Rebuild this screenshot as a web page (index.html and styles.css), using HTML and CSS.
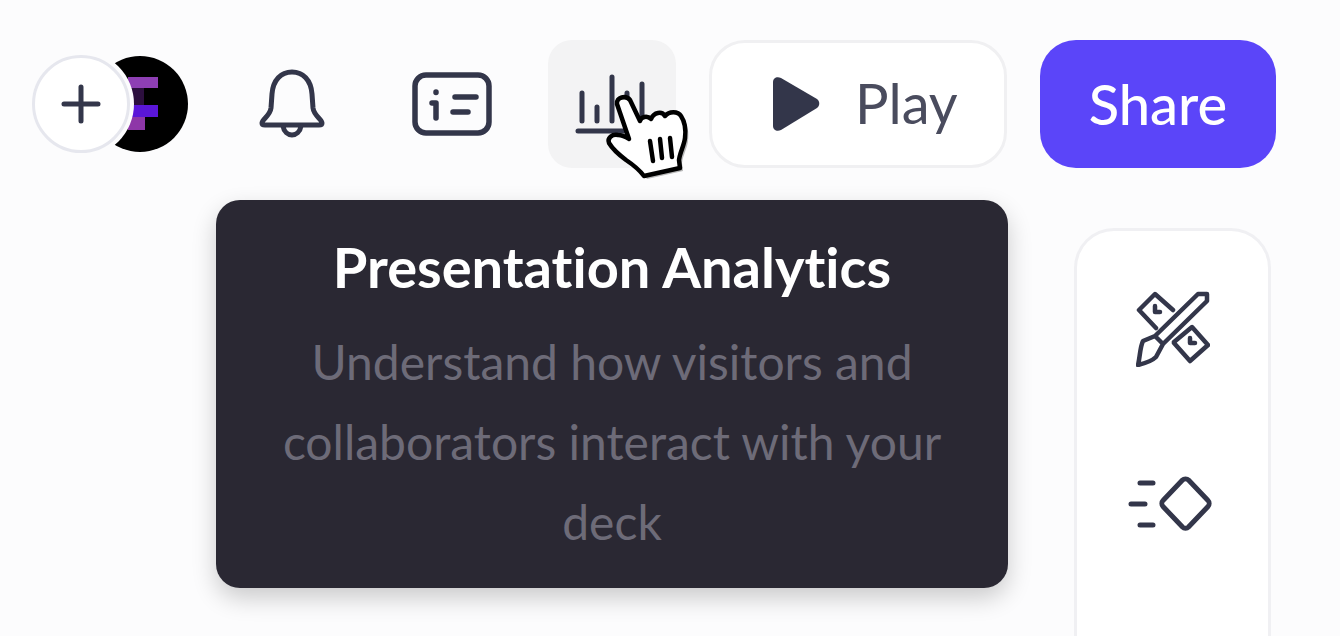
FILE: index.html
```html
<!DOCTYPE html>
<html lang="en">
<head>
<meta charset="utf-8">
<title>Presentation Analytics</title>
<link rel="stylesheet" href="styles.css">
</head>
<body>
<header class="topbar">
  <div class="people">
    <button class="add" aria-label="Add">
      <svg width="44" height="44" viewBox="0 0 44 44" fill="none" stroke="#33364a" stroke-width="5" stroke-linecap="round"><path d="M22 5v34M5 22h34"/></svg>
    </button>
    <div class="avatar">
      <svg width="96" height="96" viewBox="0 0 96 96">
        <circle cx="48" cy="48" r="48" fill="#000"/>
        <rect x="36" y="21" width="30" height="11" fill="#8e3fb4"/>
        <rect x="36" y="32" width="16" height="17" fill="#2c0f3e"/>
        <rect x="36" y="49" width="30" height="12" fill="#5a16d8"/>
        <rect x="36" y="61" width="17" height="13" fill="#8e36a8"/>
      </svg>
    </div>
  </div>
  <button class="icon-btn" aria-label="Notifications">
    <svg width="72" height="76" viewBox="0 0 72 76" fill="none" stroke="#33364a" stroke-width="5" stroke-linecap="round" stroke-linejoin="round"><path d="M6 57c0-4 8-7 9-15l1-14C17 14 25 6 36 6s19 8 20 22l1 14c1 8 9 11 9 15 0 1-1 2-3 2H9c-2 0-3-1-3-2Z"/><path d="M27 60c1 6 5 9 9 9s8-3 9-9"/></svg>
  </button>
  <button class="icon-btn" aria-label="Info">
    <svg width="80" height="64" viewBox="0 0 80 64" fill="none" stroke="#33364a" stroke-width="5.5" stroke-linecap="round" stroke-linejoin="round"><rect x="3" y="3" width="74" height="58" rx="11"/><path d="M24 20v.5M20 31h4v15M43 25h21M41 40h15"/></svg>
  </button>
  <button class="icon-btn analytics" aria-label="Analytics">
    <svg width="74" height="60" viewBox="0 0 74 60" fill="none" stroke="#33364a" stroke-width="5" stroke-linecap="round"><path d="M3 57h68M7 19v28M22 33v14M37 3v44M52 19v28M67 10v37"/></svg>
  </button>
  <button class="play"><svg width="50" height="58" viewBox="0 0 50 58"><path d="M2 7c0-4 4-6 8-4l36 21c3 2 3 7 0 9L10 55c-4 2-8 0-8-4Z" fill="#33364a"/></svg><span>Play</span></button>
  <button class="share">Share</button>
</header>
<div class="tooltip">
  <div class="tip-title">Presentation Analytics</div>
  <p class="tip-body">Understand how visitors and collaborators interact with your deck</p>
</div>
<aside class="rail">
  <svg width="74" height="76" viewBox="0 0 74 76" fill="none" stroke="#33364a" stroke-width="4.5" stroke-linejoin="round" stroke-linecap="round"><path d="M20 37 3 19 19 3l18 16M19 15v6h5M38 51l18-15 16 18-18 16-16-18M54 47v5h5"/><path d="M62 3h9v7L27 53l-8-8ZM19 45 7 50c-3 6-3 16-5 24 8-2 14-4 18-8l7-13"/></svg>
  <svg width="90" height="60" viewBox="0 0 90 60" fill="none" stroke="#33364a" stroke-width="5" stroke-linejoin="round" stroke-linecap="round"><path d="M54.500 6c1.500-1.500 4.500-1.500 6 0L80 26.500c1.500 1.500 1.500 4.500 0 6L60.500 53c-1.500 1.500-4.500 1.500-6 0L35 32.500c-1.500-1.500-1.500-4.500 0-6ZM12 9h13M3 30h14M12 51h13"/></svg>
</aside>
<svg class="cursor" width="92" height="92" viewBox="0 0 92 92">
  <path d="M13 12C12 5 22 3 26 8l10 21c1-4 7-6 11-2 3-7 11-8 14-3 4-5 13-5 16 0 4 6 5 14 4 22-1 8-5 14-6 22l1 8-36 8c-6-8-12-12-18-16C14 62 8 56 5 51c-2-5 3-9 9-8 4 0 8 2 11 4Z" transform="translate(3 3)" fill="#1a1a1a" opacity=".3"/>
  <path d="M13 12C12 5 22 3 26 8l10 21c1-4 7-6 11-2 3-7 11-8 14-3 4-5 13-5 16 0 4 6 5 14 4 22-1 8-5 14-6 22l1 8-36 8c-6-8-12-12-18-16C14 62 8 56 5 51c-2-5 3-9 9-8 4 0 8 2 11 4Z" fill="#fff" stroke="#000" stroke-width="4.5" stroke-linejoin="round"/>
  <path d="M46 49l3 20M56 47l2 19M66 46l2 19" stroke="#000" stroke-width="4.5" stroke-linecap="round"/>
</svg>
</body>
</html>
```
FILE: styles.css
```css
* { box-sizing: border-box; }
html, body { margin: 0; height: 100%; overflow: hidden; }
body { background: #fcfcfd; font-family: Lato, "Liberation Sans", sans-serif; font-variant-ligatures: none; position: relative; }
button { font-family: inherit; font-variant-ligatures: none; padding: 0; border: 0; background: none; }
.topbar { display: flex; align-items: center; gap: 32px; padding: 40px 0 0 32px; }
.people { display: flex; align-items: center; width: 164px; height: 128px; }
.add { position: relative; z-index: 1; width: 98px; height: 98px; flex: none; border-radius: 50%; background: #fff; border: 3px solid #e6e7ee; box-shadow: 0 0 0 4px #fcfcfd; display: flex; align-items: center; justify-content: center; }
.avatar { margin-left: -38px; flex: none; line-height: 0; }
.icon-btn { width: 128px; height: 128px; flex: none; display: flex; align-items: center; justify-content: center; border-radius: 24px; }
.analytics { background: #f3f3f4; }
.play { margin-left: 1px; width: 298px; height: 128px; flex: none; display: flex; align-items: center; gap: 34px; padding: 0 0 3px 59px; background: #fff; border: 3px solid #f0f0f2; border-radius: 36px; font-size: 56px; color: #4a4c5e; }
.play svg { margin-top: 3px; }
.share { margin-left: 1px; width: 236px; height: 128px; flex: none; padding-bottom: 2px; background: #5b45f9; color: #fff; font-size: 56px; font-weight: 500; border-radius: 36px; }
.tooltip { position: absolute; left: 216px; top: 200px; width: 792px; height: 388px; background: #2a2833; border-radius: 24px; box-shadow: 0 10px 24px rgba(0,0,0,.2); text-align: center; padding: 32px 56px; }
.tip-title { color: #fff; font-size: 56px; font-weight: 700; line-height: 70px; }
.tip-body { margin: 20px 0 0; color: #6d6b78; font-size: 48px; line-height: 80px; }
.rail { position: absolute; left: 1074px; top: 228px; width: 197px; height: 408px; background: #fff; border: 3px solid #f0f0f3; border-bottom: 0; border-radius: 40px 40px 0 0; display: flex; flex-direction: column; align-items: center; padding-top: 60px; gap: 107px; }
.cursor { position: absolute; left: 604px; top: 92px; }
```
